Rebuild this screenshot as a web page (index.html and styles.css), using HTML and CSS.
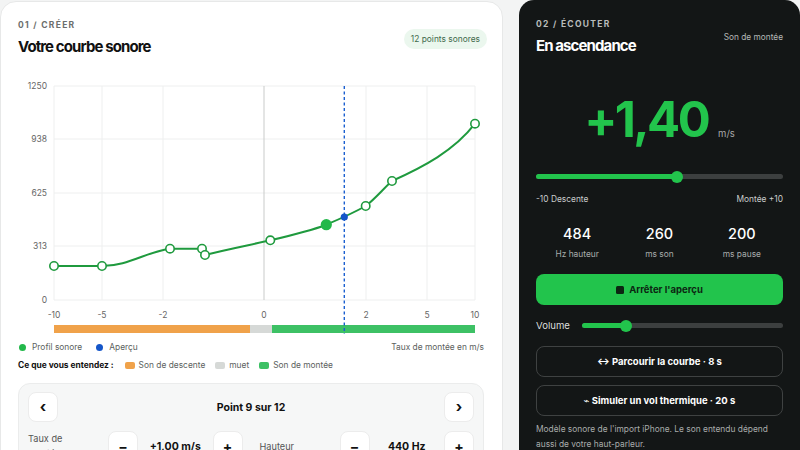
FILE: index.html
```html
<!DOCTYPE html>
<html lang="fr">
<head>
    <meta charset="UTF-8">
    <meta name="viewport" content="width=device-width, initial-scale=1.0">
    <title>Courbe sonore</title>
    <link rel="stylesheet" href="styles.css">
</head>
<body>
    <div id="page">
        <!-- 01 / creer -->
        <div class="card" id="create">
            <div class="head">
                <div>
                    <div class="step">01 / CRÉER</div>
                    <h1>Votre courbe sonore</h1>
                </div>
                <span class="badge">12 points sonores</span>
            </div>

            <svg class="chart" width="470" height="260" viewBox="0 0 470 260">
                <g class="grid">
                    <line x1="36" y1="10" x2="457" y2="10"/>
                    <line x1="36" y1="63" x2="457" y2="63"/>
                    <line x1="36" y1="117" x2="457" y2="117"/>
                    <line x1="36" y1="170" x2="457" y2="170"/>
                    <line x1="36" y1="224" x2="457" y2="224"/>
                    <line x1="36" y1="10" x2="36" y2="224"/>
                    <line x1="84" y1="10" x2="84" y2="224"/>
                    <line x1="145" y1="10" x2="145" y2="224"/>
                    <line x1="348" y1="10" x2="348" y2="224"/>
                    <line x1="409" y1="10" x2="409" y2="224"/>
                    <line x1="457" y1="10" x2="457" y2="224"/>
                </g>
                <line class="zero" x1="246" y1="10" x2="246" y2="224"/>

                <g class="ylab">
                    <text x="29" y="13">1250</text>
                    <text x="29" y="66">938</text>
                    <text x="29" y="120">625</text>
                    <text x="29" y="173">313</text>
                    <text x="29" y="227">0</text>
                </g>
                <g class="xlab">
                    <text x="36" y="242">-10</text>
                    <text x="84" y="242">-5</text>
                    <text x="145" y="242">-2</text>
                    <text x="246" y="242">0</text>
                    <text x="348" y="242">2</text>
                    <text x="409" y="242">5</text>
                    <text x="457" y="242">10</text>
                </g>

                <rect x="36" y="249" width="196" height="8" fill="#f0a24a"/>
                <rect x="232" y="249" width="22" height="8" fill="#d6d9d7"/>
                <rect x="254" y="249" width="203" height="8" fill="#3dc165"/>

                <path class="curve" d="M36 190 L84 190 C110 190 128 176 152 172.7 L184 172.7 L187 179 C210 173 232 169 252.3 164.3 C275 159 292 155 308.3 148.7 C324 142 337 136 347.7 130 C358 122 366 112 374 105 C405 91 436 75 457 47.7"/>

                <line class="cursor" x1="326.3" y1="10" x2="326.3" y2="258"/>

                <g class="pt">
                    <circle cx="36" cy="190" r="4.2"/>
                    <circle cx="84" cy="190" r="4.2"/>
                    <circle cx="152" cy="172.7" r="4.2"/>
                    <circle cx="184" cy="172.7" r="4.2"/>
                    <circle cx="187" cy="179" r="4.2"/>
                    <circle cx="252.3" cy="164.3" r="4.2"/>
                    <circle cx="347.7" cy="130" r="4.2"/>
                    <circle cx="374" cy="105" r="4.2"/>
                    <circle cx="457" cy="47.7" r="4.2"/>
                </g>
                <circle cx="308.3" cy="148.7" r="5.6" fill="#22b84a"/>
                <circle cx="326.3" cy="141" r="3.6" fill="#1556c9"/>
            </svg>

            <div class="legend">
                <span class="key"><i class="dot green"></i>Profil sonore</span>
                <span class="key"><i class="dot blue"></i>Aperçu</span>
                <span class="unit">Taux de montée en m/s</span>
            </div>
            <div class="hear">
                <b>Ce que vous entendez :</b>
                <span class="key"><i class="swatch orange"></i>Son de descente</span>
                <span class="key"><i class="swatch grey"></i>muet</span>
                <span class="key"><i class="swatch green"></i>Son de montée</span>
            </div>

            <div class="editor">
                <div class="nav">
                    <button class="sq arrow">‹</button>
                    <span>Point 9 sur 12</span>
                    <button class="sq arrow">›</button>
                </div>
                <div class="fields">
                    <div class="field">
                        <label>Taux de montée</label>
                        <button class="sq">−</button>
                        <span class="val">+1,00 m/s</span>
                        <button class="sq">+</button>
                    </div>
                    <div class="field">
                        <label>Hauteur</label>
                        <button class="sq">−</button>
                        <span class="val">440 Hz</span>
                        <button class="sq">+</button>
                    </div>
                </div>
            </div>
        </div>

        <!-- 02 / ecouter -->
        <div class="card dark" id="listen">
            <div class="head">
                <div>
                    <div class="step">02 / ÉCOUTER</div>
                    <h1>En ascendance</h1>
                </div>
                <span class="mode">Son de montée</span>
            </div>

            <div class="rate">
                <span class="big">+1,40</span>
                <span class="ms">m/s</span>
            </div>

            <div class="slider">
                <div class="fill" style="width: 57%"></div>
                <div class="knob" style="left: 57%"></div>
            </div>
            <div class="ends">
                <span>-10 Descente</span>
                <span>Montée +10</span>
            </div>

            <div class="stats">
                <div><b>484</b><span>Hz hauteur</span></div>
                <div><b>260</b><span>ms son</span></div>
                <div><b>200</b><span>ms pause</span></div>
            </div>

            <button class="primary"><i class="stop"></i>Arrêter l'aperçu</button>

            <div class="volume">
                <span>Volume</span>
                <div class="slider">
                    <div class="fill" style="width: 22%"></div>
                    <div class="knob" style="left: 22%"></div>
                </div>
            </div>

            <button class="ghost">↔ Parcourir la courbe · 8 s</button>
            <button class="ghost">⌁ Simuler un vol thermique · 20 s</button>

            <p class="note">Modèle sonore de l'import iPhone. Le son entendu dépend aussi de votre haut-parleur.</p>
        </div>
    </div>
</body>
</html>
```

FILE: styles.css
```css
body {
    margin: 0;
    background: #f3f4f4;
    font-family: Inter, "Noto Sans", sans-serif;
    color: #111;
    overflow: hidden;
}

#page {
    display: flex;
    gap: 16px;
    align-items: flex-start;
}

.card {
    box-sizing: border-box;
    height: 480px;
    border-radius: 16px;
}

#create {
    width: 503px;
    margin-top: 1px;
    background: #fff;
    border: 1px solid #e7e8e8;
    padding: 17px 15px 0 17px;
}

.head {
    display: flex;
    justify-content: space-between;
    align-items: flex-start;
}

.step {
    font-size: 8.5px;
    font-weight: 700;
    letter-spacing: 1.3px;
    color: #6b6e6d;
    line-height: 12px;
}

h1 {
    margin: 6px 0 0;
    font-size: 15px;
    line-height: 20px;
    letter-spacing: -0.9px;
    font-weight: 700;
}

.badge {
    margin-top: 10px;
    background: #ebf7ee;
    color: #3f6a4c;
    font-size: 8.4px;
    padding: 0 7px;
    line-height: 20px;
    border-radius: 10px;
}

.chart {
    display: block;
    margin-top: 19px;
    font-family: Inter, sans-serif;
}

.grid line {
    stroke: #eeefef;
    stroke-width: 1;
}

.zero {
    stroke: #c9cbca;
    stroke-width: 1;
}

.ylab text {
    font-size: 8.5px;
    fill: #666;
    text-anchor: end;
}

.xlab text {
    font-size: 8.5px;
    fill: #666;
    text-anchor: middle;
}

.curve {
    fill: none;
    stroke: #1f9a3e;
    stroke-width: 2;
}

.cursor {
    stroke: #1a5fd0;
    stroke-width: 1.4;
    stroke-dasharray: 3 2.5;
}

.pt circle {
    fill: #fff;
    stroke: #1f9a3e;
    stroke-width: 1.6;
}

.legend,
.hear {
    display: flex;
    align-items: center;
    font-size: 8.4px;
    color: #5c5f5e;
    line-height: 14px;
}

.legend {
    margin-top: 4px;
    gap: 13px;
}

.unit {
    margin-left: auto;
    margin-right: 3px;
}

.hear {
    margin-top: 4px;
    gap: 10px;
}

.hear b {
    color: #111;
    margin-right: 1px;
}

.key {
    display: flex;
    align-items: center;
}

.dot {
    width: 7px;
    height: 7px;
    border-radius: 50%;
    margin: 0 6px 0 1px;
}

.dot.green { background: #22b84a; }
.dot.blue { background: #1556c9; }

.swatch {
    width: 10px;
    height: 7px;
    border-radius: 2px;
    margin-right: 4px;
}

.swatch.orange { background: #f0a24a; }
.swatch.grey { background: #d6d9d7; }
.swatch.green { background: #3dc165; }

.editor {
    margin: 11px 3px 0 0;
    background: #f6f7f7;
    border: 1px solid #ebecec;
    border-radius: 12px;
    padding: 8px 9px;
}

.sq {
    box-sizing: border-box;
    width: 30px;
    height: 30px;
    padding: 0;
    background: #fff;
    border: 1px solid #ececec;
    border-radius: 8px;
    font-family: Inter, sans-serif;
    font-size: 14px;
    font-weight: 700;
    color: #111;
}

.sq.arrow {
    font-size: 15px;
    padding-bottom: 2px;
}

.nav {
    display: flex;
    justify-content: space-between;
    align-items: center;
    font-size: 10.5px;
    font-weight: 700;
}

.fields {
    margin-top: 9px;
    display: grid;
    grid-template-columns: 1fr 1fr;
    gap: 17px;
}

.field {
    display: grid;
    grid-template-columns: 80px 30px 1fr 30px;
    align-items: center;
}

.field label {
    font-size: 9.2px;
    color: #555;
    line-height: 15px;
    width: 56px;
}

.val {
    text-align: center;
    font-size: 10.5px;
    font-weight: 700;
}

/* dark side */

.dark {
    width: 281px;
    background: #131616;
    color: #fff;
    padding: 18px 17px 0;
    border-radius: 15px 15px 0 0;
}

.dark .step {
    color: #b9bcbb;
}

.mode {
    margin-top: 14px;
    font-size: 8.3px;
    color: #b5b8b7;
}

.rate {
    display: flex;
    justify-content: center;
    align-items: baseline;
    margin-top: 33px;
    height: 62px;
}

.big {
    font-size: 49px;
    font-weight: 700;
    letter-spacing: -2.6px;
    color: #22c44c;
    line-height: 62px;
}

.ms {
    font-size: 9.5px;
    color: #aaa;
    margin-left: 10px;
}

.slider {
    position: relative;
    height: 5px;
    border-radius: 3px;
    background: #3c3f3f;
}

.rate + .slider {
    margin-top: 23px;
}

.fill {
    height: 100%;
    border-radius: 3px;
    background: #22c44c;
}

.knob {
    position: absolute;
    top: -3.5px;
    width: 12px;
    height: 12px;
    margin-left: -6px;
    border-radius: 50%;
    background: #22c44c;
}

.ends {
    display: flex;
    justify-content: space-between;
    margin-top: 13px;
    font-size: 8.4px;
    color: #c9cccb;
    line-height: 14px;
}

.stats {
    display: grid;
    grid-template-columns: 1fr 1fr 1fr;
    margin-top: 18px;
    text-align: center;
}

.stats b {
    display: block;
    font-size: 14.5px;
    font-weight: 500;
    line-height: 20px;
}

.stats span {
    display: block;
    margin-top: 3px;
    font-size: 8.4px;
    color: #a9acab;
    line-height: 14px;
}

.primary,
.ghost {
    display: flex;
    align-items: center;
    justify-content: center;
    width: 100%;
    height: 31px;
    border-radius: 8px;
    font-family: Inter, "DejaVu Sans", sans-serif;
    font-size: 9.5px;
    font-weight: 700;
}

.primary {
    margin-top: 13px;
    border: none;
    background: #22c44c;
    color: #0c2612;
}

.stop {
    width: 8px;
    height: 8px;
    border-radius: 1.5px;
    background: #0c2612;
    margin-right: 5px;
}

.volume {
    display: flex;
    align-items: center;
    margin-top: 15px;
    font-size: 9.6px;
    color: #dcdedd;
}

.volume .slider {
    flex: 1;
    margin-left: 12px;
}

.ghost {
    margin-top: 8px;
    background: transparent;
    border: 1px solid #3f4242;
    color: #fff;
}

.volume + .ghost {
    margin-top: 15px;
}

.note {
    margin: 6px 0 0;
    font-size: 8.4px;
    line-height: 15px;
    color: #a9acab;
}
```
